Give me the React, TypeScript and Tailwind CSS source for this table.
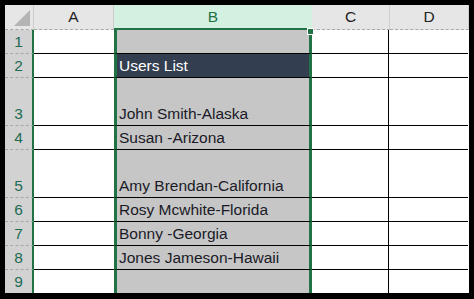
const rows = [
  { n: "1", h: "h-[24px]", text: "" },
  { n: "2", h: "h-[24px]", text: "Users List", dark: true },
  { n: "3", h: "h-[48px]", text: "John Smith-Alaska" },
  { n: "4", h: "h-[24px]", text: "Susan -Arizona" },
  { n: "5", h: "h-[48px]", text: "Amy Brendan-California" },
  { n: "6", h: "h-[24px]", text: "Rosy Mcwhite-Florida" },
  { n: "7", h: "h-[24px]", text: "Bonny -Georgia" },
  { n: "8", h: "h-[24px]", text: "Jones Jameson-Hawaii" },
  { n: "9", h: "h-[23px]", text: "", last: true },
];

export default function App() {
  return (
    <div className="h-[299px] w-[474px] overflow-hidden bg-black p-[5px] font-['Liberation_Sans',Arial,sans-serif] text-[15.5px]">
      <div className="relative h-[288px] w-[464px] bg-white">
        {/* column headers */}
        <div className="flex h-[25px]">
          <div className="flex w-[29px] items-end justify-end border-r border-b border-r-[#cfcfcf] border-b-[#a8a8a8] bg-[#e6e6e6] p-[3px] [border-bottom-style:dashed]">
            <svg width="16" height="16" viewBox="0 0 16 16">
              <polygon points="16,0 16,16 0,16" fill="#b4b4b4" />
            </svg>
          </div>
          <HeaderCell label="A" w="w-[80px]" />
          <div className="flex w-[198px] items-center justify-center border-b-2 border-[#217346] bg-[#d3f0e0] text-[#217346]">
            B
          </div>
          <HeaderCell label="C" w="w-[78px]" />
          <HeaderCell label="D" w="w-[79px]" />
        </div>

        {rows.map((r) => (
          <div key={r.n} className={`flex ${r.h}`}>
            <div
              className={`flex w-[29px] items-end justify-center border-r-2 border-r-[#217346] bg-[#d2d2d2] text-[#1e6b52] ${
                r.last ? "" : "border-b border-b-[#a8a8a8] [border-bottom-style:dashed]"
              }`}
            >
              {r.n}
            </div>
            <div className={`w-[80px] ${r.last ? "" : "border-b border-black"}`} />
            <div
              className={`flex w-[198px] items-end border-x-[3px] border-x-[#217346] pl-[2px] leading-[22px] ${
                r.dark ? "bg-[#333f50] text-white" : "bg-[#c6c6c6] text-[#1a1a26]"
              } ${r.last ? "" : "border-b border-b-black"}`}
            >
              {r.text}
            </div>
            <div className={`w-[77px] border-r border-black ${r.last ? "" : "border-b"}`} />
            <div className={`w-[79px] ${r.last ? "" : "border-b border-black"}`} />
          </div>
        ))}

        {/* fill handle */}
        <div className="absolute top-[23px] left-[302px] h-[7px] w-[7px] border border-white bg-[#217346]" />
      </div>
    </div>
  );
}

function HeaderCell({ label, w }: { label: string; w: string }) {
  return (
    <div
      className={`flex ${w} items-center justify-center border-r border-b border-r-[#cfcfcf] border-b-[#a8a8a8] bg-[#e6e6e6] text-[#222] [border-bottom-style:dashed]`}
    >
      {label}
    </div>
  );
}
